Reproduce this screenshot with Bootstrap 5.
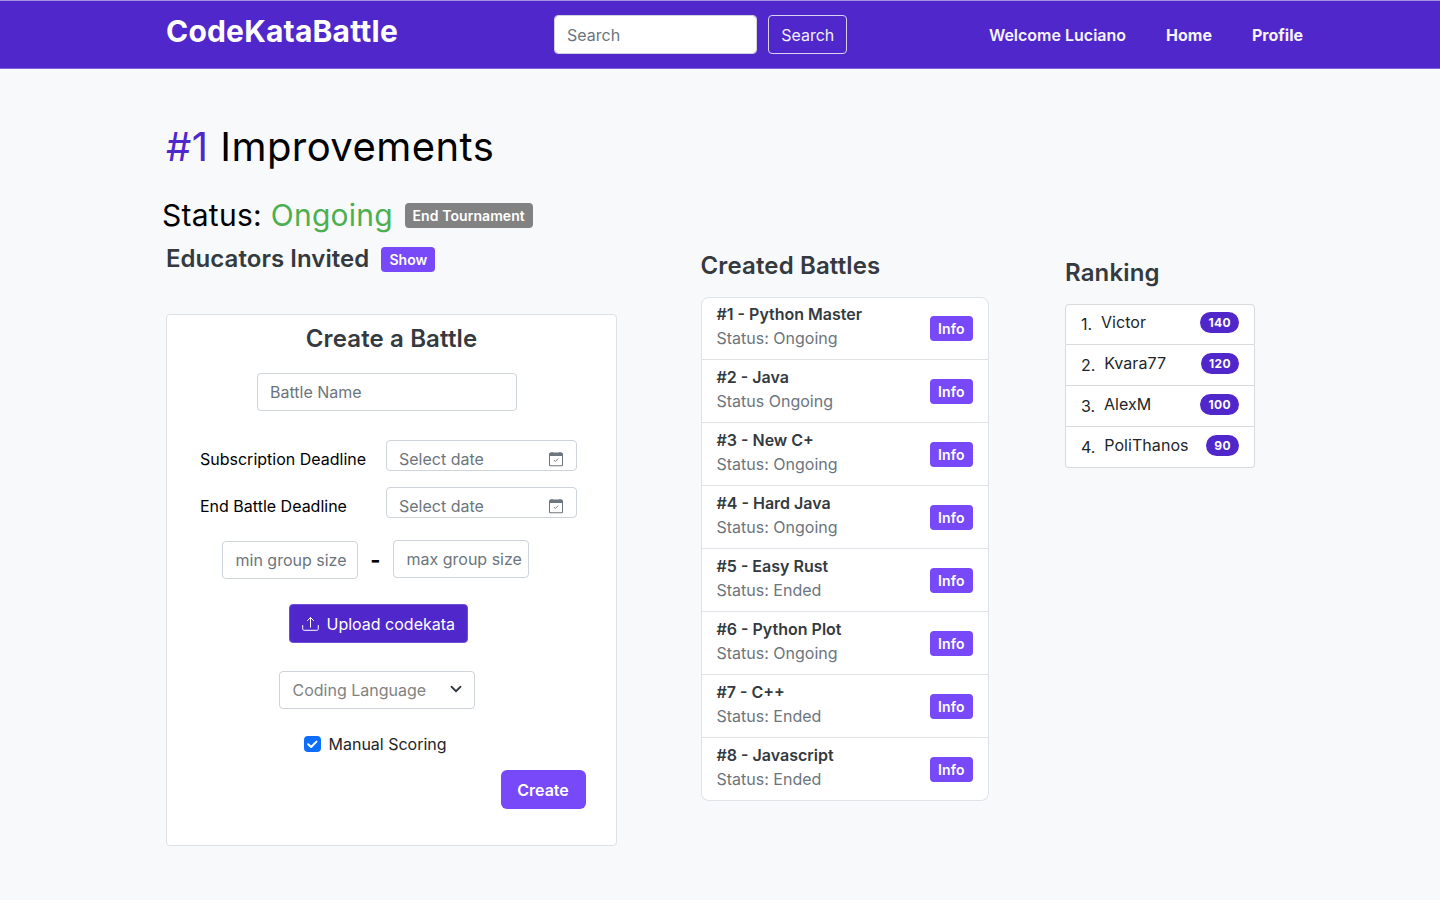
<!DOCTYPE html>
<html lang="en">
<head>
<meta charset="utf-8">
<meta name="viewport" content="width=device-width, initial-scale=1">
<title>CodeKataBattle</title>
<link href="https://cdn.jsdelivr.net/npm/bootstrap@5.3.0/dist/css/bootstrap.min.css" rel="stylesheet">
<style>
  :root { --brand: #5027cb; --accent: #7749f8; }
  body { font-family: Inter, "Liberation Sans", sans-serif; background: #f8f9fb; color: #212529; height: 900px; overflow: hidden; }
  .topbar { background: var(--brand); height: 69px; border-top: 1px solid #a493e2; border-bottom: 1px solid #7f62d8; padding: 14px 137px 0 166px; }
  .topbar .navbar-brand { font-size: 30px; font-weight: 700; line-height: 32px; width: 388px; letter-spacing: .2px; }
  .topbar form { width: 293px; }
  .topbar .form-control { width: 203px; }
  .topbar .form-control, .topbar .btn-search { height: 39px; padding-top: 7px; }
  .topbar .nav-link { color: #f6f4fd; font-weight: 600; line-height: 24px; padding: 0; }
  .form-control, .btn-box, .picker { font-size: 16px; line-height: 24px; border: 1px solid #ced4da; border-radius: 4px; padding: 6px 12px; height: 38px; font-weight: 400; }
  .form-control::placeholder { color: #6c757d; opacity: 1; }
  .topbar .btn-search { border-color: #d8cff3; color: #f3f0fc; width: 79px; padding-left: 11.5px; padding-right: 11px; }
  .page { padding: 54px 0 0 166px; }
  .page h1 { font-size: 40px; line-height: 48px; font-weight: 400; color: #000; letter-spacing: .45px; }
  .page h1 span { color: var(--brand); }
  .status-line { font-size: 30px; line-height: 36px; color: #000; margin-left: -4px; }
  .status-line > div { letter-spacing: .27px; }
  .status-line .live { color: #4caf50; }
  .section-title { font-size: 24px; line-height: 28px; font-weight: 600; color: #343a40; letter-spacing: .14px; }
  .btn-mini { font-size: 14px; line-height: 21px; font-weight: 600; color: #fff; background: var(--accent); border: 0; border-radius: 4px; padding: 2px 8px; height: 25px; letter-spacing: .08px; }
  .btn-gray { background: #828282; }
  .col-form { width: 451px; }
  .col-battles { width: 288px; margin-left: 83.5px; padding-top: 129px; }
  .col-ranking { width: 190px; margin-left: 76.5px; padding-top: 136px; }
  .battle-card { height: 532px; border: 1px solid #dee2e6; border-radius: 4px; margin-top: 41px; padding-top: 10px; }
  .w-name { width: 260px; margin: 20px 0 0 90px; }
  .deadline { padding-left: 33px; color: #000; }
  .deadline label { width: 186px; line-height: 24px; padding-top: 7px; }
  .picker { width: 191px; height: 31px; color: #6c757d; }
  .w-size { width: 136px; padding-left: 12.5px; }
  .btn-upload { background: var(--brand); border-color: #704fd5; color: #fff; width: 179px; height: 39px; padding-top: 7px; gap: 7.5px; margin: 25px 0 0 122px; }
  .lang { width: 196px; margin: 28px 0 0 112px; padding-left: 12.5px; color: #828282; }
  .scoring { margin: 23px 0 0 137px; gap: 7px; }
  .scoring .form-check-input { width: 17px; height: 16px; border: 0; background: #0d6efd; border-radius: 4px; }
  .check-box { display: grid; }
  .check-box > * { grid-area: 1 / 1; pointer-events: none; }
  .scoring .form-check-input:checked { background-image: none; }
  .scoring label { padding-left: .5px; }
  .btn-create { background: var(--accent); color: #fff; font-weight: 600; width: 85px; height: 39px; border: 0; border-radius: 6px; padding: 1px 1px 0 0; margin: 14px 30px 0 0; }
  .battles { --bs-list-group-border-color: #dfe2e6; --bs-list-group-border-radius: 8px; margin-top: 17px; }
  .battles .list-group-item { height: 63px; padding: 5px 15px 0; line-height: 24px; }
  .battles .list-group-item:first-child { padding-top: 4px; }
  .battles .list-group-item b { font-weight: 600; color: #343a40; }
  .battles .state { color: #6c757d; }
  .battles .btn-mini { margin-top: 14px; }
  .ranking { --bs-list-group-border-radius: 4px; --bs-list-group-border-color: #d9dadc; margin-top: 17px; }
  .ranking .list-group-item { height: 41px; padding: 6px 15px 0; line-height: 24px; color: #212529; letter-spacing: .06px; }
  .ranking .list-group-item:first-child { padding-top: 5px; }
  .ranking .rank-no { font-weight: 400; letter-spacing: -.1px; padding-top: 2px; }
  .ranking .badge { background: var(--brand); font-size: 12px; line-height: 12px; font-weight: 700; padding: 4.5px 8px; height: 21px; margin-top: 2px; letter-spacing: .4px; }
</style>
</head>
<body>
<nav class="topbar d-flex align-items-start">
  <a class="navbar-brand text-white m-0 p-0" href="#">CodeKataBattle</a>
  <form class="d-flex justify-content-between">
    <input class="form-control" type="search" placeholder="Search">
    <button class="btn btn-box btn-search" type="button">Search</button>
  </form>
  <ul class="nav ms-auto" style="gap: 40px; padding-top: 8px">
    <li><a class="nav-link" href="#">Welcome Luciano</a></li>
    <li><a class="nav-link fw-bold" href="#">Home</a></li>
    <li><a class="nav-link fw-bold" href="#">Profile</a></li>
  </ul>
</nav>

<main class="page d-flex align-items-start">
  <section class="col-form flex-shrink-0">
    <h1 class="m-0"><span>#1</span> Improvements</h1>
    <div class="status-line d-flex align-items-center" style="margin-top: 26px; gap: 11.5px">
      <div class="text-nowrap">Status: <span class="live">Ongoing</span></div>
      <button class="btn-mini btn-gray">End Tournament</button>
    </div>
    <div class="d-flex align-items-center" style="margin-top: 12px; gap: 12px">
      <h2 class="section-title m-0" style="letter-spacing: .05px">Educators Invited</h2>
      <button class="btn-mini">Show</button>
    </div>

    <div class="battle-card bg-white">
      <h2 class="section-title text-center m-0">Create a Battle</h2>
      <input class="form-control w-name" type="text" placeholder="Battle Name">
      <div class="deadline d-flex" style="margin-top: 29px">
        <label>Subscription Deadline</label>
        <div class="picker d-flex justify-content-between">
          <span>Select date</span>
          <svg width="16" height="16" viewBox="0 0 16 16" fill="#6c757d" style="margin-top: 4px"><use href="#cal"/></svg>
        </div>
      </div>
      <div class="deadline d-flex" style="margin-top: 16px">
        <label>End Battle Deadline</label>
        <div class="picker d-flex justify-content-between">
          <span>Select date</span>
          <svg width="16" height="16" viewBox="0 0 16 16" fill="#6c757d" style="margin-top: 4px"><use href="#cal"/></svg>
        </div>
      </div>
      <div class="d-flex" style="margin: 22px 0 0 55px">
        <input class="form-control w-size pe-0" style="margin-top: 1px" type="text" placeholder="min group size">
        <span class="text-center text-black fw-bold" style="width: 35px; font-size: 22px; line-height: 38px; padding-top: 1px; margin-bottom: -1px">-</span>
        <input class="form-control w-size pe-0" type="text" placeholder="max group size">
      </div>
      <button class="btn btn-box btn-upload d-flex text-nowrap">
        <svg width="17" height="16" viewBox="0 0 17 16" fill="none" stroke="currentColor" stroke-linecap="round" stroke-linejoin="round" class="flex-shrink-0" style="margin-top: 4px">
          <path d="M.7 9.500v3.300c0 .9.600 1.500 1.500 1.500h12.600c.9 0 1.500-.6 1.500-1.500V9.500M8.500 11.200V1.600M5.400 4.600l3.100-3.100 3.100 3.100"/>
        </svg>
        Upload codekata
      </button>
      <div class="picker lang d-flex justify-content-between" style="height: 38px">
        <span>Coding Language</span>
        <svg width="12" height="12" viewBox="0 0 16 16" fill="none" stroke="#343a40" stroke-width="2.400" stroke-linecap="round" stroke-linejoin="round" style="margin-top: 5px"><path d="m2 5 6 6 6-6"/></svg>
      </div>
      <div class="scoring d-flex align-items-center">
        <span class="check-box">
          <input class="form-check-input m-0" type="checkbox" id="manual" checked>
          <svg width="17" height="16" viewBox="0 0 17 16" fill="none" stroke="#fff" stroke-width="2" stroke-linecap="round" stroke-linejoin="round"><path d="m4.200 8.300 2.900 2.700 5.400-5.400"/></svg>
        </span>
        <label for="manual">Manual Scoring</label>
      </div>
      <div class="d-flex justify-content-end"><button class="btn btn-create">Create</button></div>
    </div>
  </section>

  <section class="col-battles flex-shrink-0">
    <h2 class="section-title m-0">Created Battles</h2>
    <ul class="list-group battles">
      <li class="list-group-item d-flex justify-content-between"><div><b>#1 - Python Master</b><div class="state">Status: Ongoing</div></div><button class="btn-mini">Info</button></li>
      <li class="list-group-item d-flex justify-content-between"><div><b>#2 - Java</b><div class="state">Status Ongoing</div></div><button class="btn-mini">Info</button></li>
      <li class="list-group-item d-flex justify-content-between"><div><b>#3 - New C+</b><div class="state">Status: Ongoing</div></div><button class="btn-mini">Info</button></li>
      <li class="list-group-item d-flex justify-content-between"><div><b>#4 - Hard Java</b><div class="state">Status: Ongoing</div></div><button class="btn-mini">Info</button></li>
      <li class="list-group-item d-flex justify-content-between"><div><b>#5 - Easy Rust</b><div class="state">Status: Ended</div></div><button class="btn-mini">Info</button></li>
      <li class="list-group-item d-flex justify-content-between"><div><b>#6 - Python Plot</b><div class="state">Status: Ongoing</div></div><button class="btn-mini">Info</button></li>
      <li class="list-group-item d-flex justify-content-between"><div><b>#7 - C++</b><div class="state">Status: Ended</div></div><button class="btn-mini">Info</button></li>
      <li class="list-group-item d-flex justify-content-between"><div><b>#8 - Javascript</b><div class="state">Status: Ended</div></div><button class="btn-mini">Info</button></li>
    </ul>
  </section>

  <section class="col-ranking flex-shrink-0">
    <h2 class="section-title m-0">Ranking</h2>
    <ul class="list-group ranking">
      <li class="list-group-item d-flex"><span class="rank-no">1.</span><span style="margin-left: 9px">Victor</span><span class="badge rounded-pill ms-auto">140</span></li>
      <li class="list-group-item d-flex"><span class="rank-no">2.</span><span style="margin-left: 9px">Kvara77</span><span class="badge rounded-pill ms-auto">120</span></li>
      <li class="list-group-item d-flex"><span class="rank-no">3.</span><span style="margin-left: 9px">AlexM</span><span class="badge rounded-pill ms-auto">100</span></li>
      <li class="list-group-item d-flex"><span class="rank-no">4.</span><span style="margin-left: 9px">PoliThanos</span><span class="badge rounded-pill ms-auto">90</span></li>
    </ul>
  </section>
</main>

<svg width="0" height="0" class="d-block">
  <symbol id="cal" viewBox="0 0 16 16">
    <path fill-rule="evenodd" d="M2.500 1.500h.8V1h1.400v.5h6.600V1h1.400v.5h.8A1.500 1.500 0 0 1 15 3v11a1.200 1.200 0 0 1-1.200 1.200H2.200A1.200 1.200 0 0 1 1 14V3a1.500 1.500 0 0 1 1.500-1.500zM2 5v8.700c0 .3.200.5.500.5h11c.3 0 .5-.2.500-.5V5z"/>
    <path d="m5.800 9 1.500 1.500 2.900-2.900" fill="none" stroke="#6c757d" stroke-width=".9"/>
  </symbol>
</svg>
<script src="https://cdn.jsdelivr.net/npm/bootstrap@5.3.0/dist/js/bootstrap.bundle.min.js"></script>
</body>
</html>
